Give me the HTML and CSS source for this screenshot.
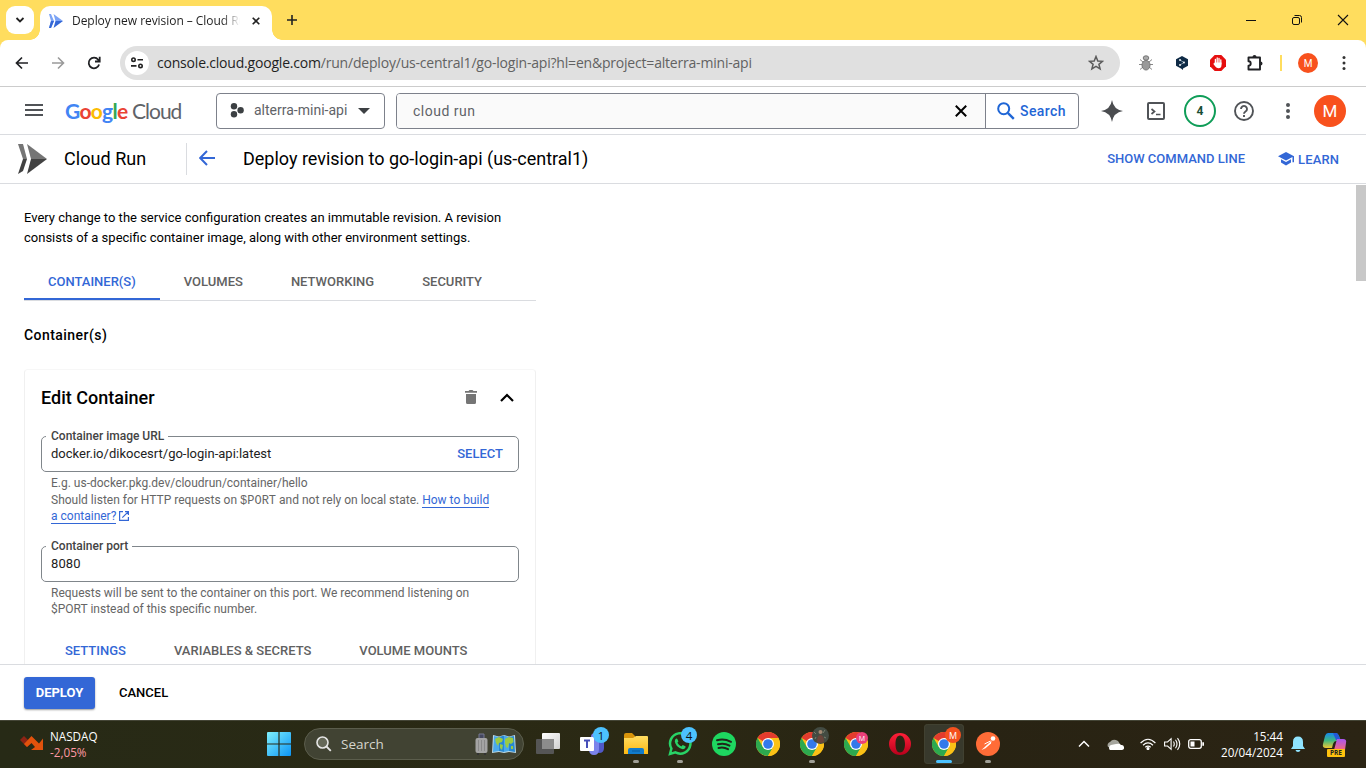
FILE: index.html
```html
<!DOCTYPE html>
<html lang="en">
<head>
<meta charset="utf-8">
<title>Deploy new revision – Cloud Run</title>
<link rel="stylesheet" href="styles.css">
</head>
<body>
<svg class="defs" width="0" height="0">
  <defs>
    <linearGradient id="win" x1="0" y1="0" x2="1" y2="1"><stop offset="0" stop-color="#7ff0fd"/><stop offset="1" stop-color="#0c95f5"/></linearGradient>
    <linearGradient id="folder" x1="0" y1="0" x2="0" y2="1"><stop offset="0" stop-color="#ffdd62"/><stop offset="1" stop-color="#fcb813"/></linearGradient>
    <linearGradient id="opera" x1="0" y1="0" x2="0" y2="1"><stop offset="0" stop-color="#ff2038"/><stop offset="1" stop-color="#b8001c"/></linearGradient>
    <linearGradient id="copA" x1="0" y1="0" x2="0" y2="1"><stop offset="0" stop-color="#1587ee"/><stop offset=".5" stop-color="#3fb87f"/><stop offset="1" stop-color="#f1c832"/></linearGradient>
    <linearGradient id="copB" x1="0" y1="0" x2="0" y2="1"><stop offset="0" stop-color="#a855f0"/><stop offset="1" stop-color="#f46a7c"/></linearGradient>
    <linearGradient id="view" x1="0" y1="0" x2="1" y2="1"><stop offset="0" stop-color="#fff"/><stop offset="1" stop-color="#d0d0d0"/></linearGradient>
    <symbol id="chrome" viewBox="0 0 24 24">
      <circle cx="12" cy="12" r="12" fill="#fbc116"/>
      <path d="M12 12 1.6 6A12 12 0 0 1 22.4 6H12z" fill="#e33b2e"/>
      <path d="M1.6 6A12 12 0 0 0 12 24l5.2-9L12 12 6.8 15z" fill="#2da94f"/>
      <path d="M22.4 6H12v6l5.2 3L12 24A12 12 0 0 0 22.4 6z" fill="#fbc116"/>
      <circle cx="12" cy="12" r="6" fill="#fff"/><circle cx="12" cy="12" r="4.8" fill="#3379ea"/>
    </symbol>
    <symbol id="dots" viewBox="0 0 24 24"><circle cx="12" cy="6" r="2"/><circle cx="12" cy="12" r="2"/><circle cx="12" cy="18" r="2"/></symbol>
  </defs>
</svg>

<div class="screen">
  <header class="titlebar">
    <button class="tab-search"><svg width="10" height="8" viewBox="0 0 10 8"><path d="M1.5 2 5 5.5 8.5 2" fill="none" stroke="#222" stroke-width="1.8"/></svg></button>
    <div class="tab">
      <svg class="favicon" width="16" height="16" viewBox="0 0 16 16"><path d="M1 1h2l3 7-3 7H1l2-7z" fill="#7ba3f5"/><path d="M3 8h3l-3 7H1z" fill="#3367d6"/><path d="M5.500 1 15 8H7.500z" fill="#7ba3f5"/><path d="M7.500 8H15l-9.500 7z" fill="#3367d6"/></svg>
      <span class="tab-title">Deploy new revision – Cloud Run</span>
      <svg class="tab-close" width="8" height="8" viewBox="0 0 8 8"><path d="M.7.7l6.600 6.600M7.300.7.7 7.300" stroke="#222" stroke-width="1.600"/></svg>
    </div>
    <svg class="new-tab" width="10" height="10" viewBox="0 0 10 10"><path d="M5 0v10M0 5h10" stroke="#222" stroke-width="1.600"/></svg>
    <div class="window-controls">
      <svg width="46" height="40" viewBox="0 0 46 40"><path d="M18 20.500h10" stroke="#111"/></svg>
      <svg width="46" height="40" viewBox="0 0 46 40" fill="none" stroke="#111"><rect x="18.500" y="17.500" width="7" height="7" rx="1.500"/><path d="M20.500 15.500h5q2 0 2 2v5"/></svg>
      <svg width="46" height="40" viewBox="0 0 46 40"><path d="M18 15l10 10M28 15 18 25" stroke="#111" stroke-width="1.100"/></svg>
    </div>
  </header>

  <div class="toolbar">
    <span class="cell"><svg width="14" height="14" viewBox="0 0 14 14" fill="none" stroke="#202124" stroke-width="1.700"><path d="M13 7H2M7 1.500 1.500 7 7 12.500"/></svg></span>
    <span class="cell"><svg width="14" height="14" viewBox="0 0 14 14" fill="none" stroke="#9a9a9a" stroke-width="1.600"><path d="M1 7h11M7 1.500 12.500 7 7 12.500"/></svg></span>
    <span class="cell"><svg width="14" height="14" viewBox="0 0 14 14" fill="none" stroke="#202124" stroke-width="1.800"><path d="M12.100 8.500A5.300 5.300 0 1 1 11.200 3.700L12.500 5M12.700.8v4.700H8"/></svg></span>
    <div class="omnibox">
      <span class="site-info"><svg width="14" height="12" viewBox="0 0 14 12" fill="none" stroke="#222" stroke-width="1.600"><circle cx="3.500" cy="2.700" r="1.700"/><path d="M7.500 2.700H13M1 8.900h5.500"/><circle cx="10.500" cy="8.900" r="1.700"/></svg></span>
      <span class="url"><b>console.cloud.google.com</b>/run/deploy/us-central1/go-login-api?hl=en&amp;project=alterra-mini-api</span>
      <svg class="star" width="16" height="16" viewBox="0 0 16 16"><path d="M8 1.500 9.800 6l4.700.3-3.600 3 1.200 4.600L8 11.400l-4.100 2.500 1.200-4.600-3.600-3L6.200 6z" fill="none" stroke="#5b5b5b" stroke-width="1.500"/></svg>
    </div>
    <div class="extensions">
      <span class="cell"><svg width="16" height="16" viewBox="0 0 16 16"><g stroke="#888" fill="none"><path d="M5 7 2 4.500M11 7l3-2.500M4 9.500H1M12 9.500h3M5 12l-3 2.500M11 12l3 2.500"/></g><ellipse cx="8" cy="10.200" rx="4" ry="4.800" fill="#999" stroke="#777"/><ellipse cx="8" cy="3" rx="2.800" ry="2.200" fill="#aaa" stroke="#777"/></svg></span>
      <span class="cell"><svg width="12" height="14" viewBox="0 0 12 14"><path d="M6 0l6 3.200v6.600L7 12.500V14l-2-1.500L0 9.800V3.200z" fill="#0f2b46"/><path d="M4 4l4 2.500L4 9" fill="none" stroke="#9fb4c5" stroke-width=".8"/><g fill="#fff"><circle cx="4" cy="4" r=".9"/><circle cx="8" cy="6.500" r=".9"/><circle cx="4" cy="9" r=".9"/></g></svg></span>
      <span class="cell"><svg width="16" height="16" viewBox="0 0 16 16"><path d="M4.700 0h6.600L16 4.700v6.600L11.300 16H4.700L0 11.300V4.700z" fill="#e60f0f"/><path d="M5.400 8.500V4.500M7.200 8V3M9 8V3.300M10.800 9V4.800" stroke="#fff" stroke-width="1.300" stroke-linecap="round"/><path d="M4.700 7.500h6.800v2.500q0 3.300-3 3.300-2 0-3.200-1.800L3.200 8.800l1-.6z" fill="#fff"/></svg></span>
      <span class="cell"><svg class="puzzle" width="18" height="18" viewBox="0 0 18 18"><path d="M2.500 3.500H14v12H2.500v-3.800a2.200 2.200 0 0 0 0-4.400z" fill="none" stroke="#202124" stroke-width="1.900" stroke-linejoin="round"/><path d="M6.500 3a2 2 0 0 1 4 0zM14.500 7.500a2 2 0 0 1 0 4z" fill="#202124"/></svg></span>
      <span class="profile-divider"></span>
      <span class="cell"><span class="avatar avatar-small">M</span></span>
      <span class="cell"><svg width="16" height="18" viewBox="0 0 16 18" fill="#333"><circle cx="8" cy="3.500" r="1.500"/><circle cx="8" cy="9" r="1.500"/><circle cx="8" cy="14.500" r="1.500"/></svg></span>
    </div>
  </div>

  <div class="console-bar">
    <svg class="menu" width="18" height="12" viewBox="0 0 18 12"><path d="M0 1h18M0 6h18M0 11h18" stroke="#505357" stroke-width="2"/></svg>
    <div class="brand"><span class="google"><i class="b">G</i><i class="r">o</i><i class="y">o</i><i class="b">g</i><i class="g">l</i><i class="r">e</i></span><span class="cloud">Cloud</span></div>
    <div class="project">
      <svg width="14" height="15" viewBox="0 0 14 15" fill="#3c4043"><circle cx="4" cy="3.300" r="3.200"/><circle cx="4" cy="11.300" r="3.200"/><circle cx="10.600" cy="7.300" r="3.200"/></svg>
      <span>alterra-mini-api</span>
      <svg width="12" height="6" viewBox="0 0 12 6"><path d="M0 0h12L6 6z" fill="#3c4043"/></svg>
    </div>
    <div class="search">
      <div class="search-input"><span>cloud run</span><svg width="12" height="12" viewBox="0 0 12 12"><path d="M.8.8l10.400 10.400M11.200.8.8 11.200" stroke="#000" stroke-width="2"/></svg></div>
      <div class="search-button"><svg width="18" height="18" viewBox="0 0 18 18" fill="none" stroke="#1f66d6"><circle cx="6.700" cy="6.700" r="5.500" stroke-width="2"/><path d="M10.800 10.800 16.800 16.800" stroke-width="2.400"/></svg><span>Search</span></div>
    </div>
    <div class="console-icons">
      <span><svg width="22" height="22" viewBox="0 0 22 22"><path d="M11 0q1.500 9.500 11 11-9.500 1.500-11 11Q9.500 12.500 0 11 9.500 9.500 11 0z" fill="#4b4d50"/></svg></span>
      <span><svg width="18" height="18" viewBox="0 0 18 18" fill="none" stroke="#505357"><rect x="1" y="1" width="16" height="16" rx="1" stroke-width="2"/><path d="M4.500 7 7.500 9.500 4.500 12M9 12.500h4.500" stroke-width="1.700"/></svg></span>
      <span><em class="notice-count">4</em></span>
      <span><svg width="20" height="20" viewBox="0 0 20 20" fill="none" stroke="#505357" stroke-width="1.900"><circle cx="10" cy="10" r="9"/><path d="M7 7.900a3 3 0 1 1 4.500 2.600Q10 11.500 10 12.800M10 14v2"/></svg></span>
      <span><svg width="24" height="24" fill="#505357"><use href="#dots"/></svg></span>
      <span class="account"><span class="avatar avatar-large">M</span></span>
    </div>
  </div>

  <div class="page-bar">
    <svg class="run-logo" width="30" height="30" viewBox="0 0 30 30"><path d="M0 0h5l4 15H5z" fill="#757575"/><path d="M5 15h4L5 27l-5 3z" fill="#424242"/><path d="M9 0 29 15H13z" fill="#757575"/><path d="M13 15h16L9 30z" fill="#424242"/></svg>
    <span class="product">Cloud Run</span>
    <div class="page-heading">
      <svg width="16" height="16" viewBox="0 0 16 16" fill="none" stroke="#3367d6" stroke-width="2"><path d="M16 8H1.500M8 1 1.200 8 8 15"/></svg>
      <h1>Deploy revision to go-login-api (us-central1)</h1>
    </div>
    <a class="command">SHOW COMMAND LINE</a>
    <svg class="learn-icon" width="16" height="14" viewBox="0 0 16 14" fill="#3367d6"><path d="M8 0l8 4.300v5.900h-1.500V5.100L8 8.600 0 4.300z"/><path d="M3 7.200l5 2.800 5-2.800v3.400L8 13.500l-5-2.900z"/></svg>
    <a class="learn">LEARN</a>
  </div>

  <main class="content">
    <div class="form">
      <p class="intro">Every change to the service configuration creates an immutable revision. A revision<br>consists of a specific container image, along with other environment settings.</p>
      <nav class="tabs"><a class="active">CONTAINER(S)</a><a>VOLUMES</a><a>NETWORKING</a><a>SECURITY</a></nav>
      <h2>Container(s)</h2>
      <section class="card">
        <div class="card-head">
          <h3>Edit Container</h3>
          <svg width="12" height="14" viewBox="0 0 12 14" fill="#757575"><path d="M0 1h3.500l1-1h3l1 1H12v1.700H0zM1 4h10v8.500Q11 14 9.500 14h-7Q1 14 1 12.500z"/></svg>
          <svg class="collapse" width="14" height="9" viewBox="0 0 14 9"><path d="M1 8l6-6 6 6" fill="none" stroke="#000" stroke-width="2.200"/></svg>
        </div>
        <fieldset class="field"><legend>Container image URL</legend><div class="value"><span>docker.io/dikocesrt/go-login-api:latest</span><a>SELECT</a></div></fieldset>
        <p class="hint hint-image"><span class="example">E.g. us-docker.pkg.dev/cloudrun/container/hello</span>Should listen for HTTP requests on <code>$PORT</code> and not rely on local state. <a>How to build</a><br><a>a container?</a><svg width="10" height="10" viewBox="0 0 10 10" fill="none" stroke="#3367d6" stroke-width="1.200"><path d="M4 .6H.6v8.800h8.800V6M6 .6h3.400V4M9.400.6 3.300 6.700"/></svg></p>
        <fieldset class="field"><legend>Container port</legend><div class="value"><span class="port">8080</span></div></fieldset>
        <p class="hint hint-port">Requests will be sent to the container on this port. We recommend listening on<br><span>$PORT instead of this specific number.</span></p>
        <nav class="subtabs"><a class="active">SETTINGS</a><a>VARIABLES &amp; SECRETS</a><a>VOLUME MOUNTS</a></nav>
      </section>
    </div>
    <div class="scrollbar"><div class="thumb"></div></div>
  </main>

  <footer class="actions"><button class="deploy">DEPLOY</button><button class="cancel">CANCEL</button></footer>

  <div class="taskbar">
    <div class="widget">
      <svg width="24" height="16" viewBox="0 0 24 16"><path d="M0 5 4 1l7 7-4 4z" fill="#8d2415"/><path d="M4 9 11.500 1 19 8.500l4-5V15H11l4-3-3.500-4L7 12z" fill="#e2520c"/></svg>
      <div><span>NASDAQ</span><span class="loss">-2,05%</span></div>
    </div>
    <svg class="start" width="24" height="24" viewBox="0 0 24 24" fill="url(#win)"><path d="M0 1q0-1 1-1h10.400v11.400H0zM12.600 0H23q1 0 1 1v10.400H12.600zM0 12.600h11.400V24H1q-1 0-1-1zM12.600 12.600H24V23q0 1-1 1H12.600z"/></svg>
    <div class="task-search">
      <svg width="16" height="16" viewBox="0 0 16 16"><circle cx="6.500" cy="6.500" r="5.500" fill="#656858" stroke="#e6e6e6" stroke-width="1.600"/><path d="M10.500 10.500l4.300 4.300" stroke="#e6e6e6" stroke-width="1.800"/></svg>
      <span>Search</span>
      <svg class="luggage" width="13" height="22" viewBox="0 0 13 22"><path d="M4 6V1h5v5" fill="#45485f" stroke="#767992"/><rect x=".5" y="5" width="12" height="15" rx="2" fill="#a4a4a4"/><path d="M3.500 7v11M6.500 7v11M9.500 7v11" stroke="#8a8a8a"/><path d="M2 21h2M9 21h2" stroke="#333" stroke-width="2"/></svg>
      <svg class="map" width="24" height="20" viewBox="0 0 24 20"><path d="M1 1l6 1.500L12 1l5 1.500L23 1l1 18-7-1-5 1-5-1-7 1z" fill="#bcd9e6"/><path d="M2 2l5 1v14l-6 1z" fill="#4aa9ea"/><path d="M7 3l5-1.500V18l-5-1z" fill="#2888d4"/><path d="M12 1.500l5 1.500v14l-5 1z" fill="#4aa9ea"/><path d="M17 3l5-1 1 16-6-1z" fill="#2888d4"/><path d="M3 5l4-2 4 2-1 3-3 1-1 3-2-3zM8 10l3 1-1 5-2-2zM13 5l4-2 4 1 .500 4-2.500 2-2-1-1 5-2-1-1-4zM19 12h2v3h-2z" fill="#9acb43"/></svg>
    </div>
    <div class="apps">
      <div class="app"><svg width="24" height="24" viewBox="0 0 24 24"><rect x="6" y="1" width="18" height="16" rx="1" fill="url(#view)"/><rect y="7" width="18" height="15" rx="1" fill="#555"/><path d="M6 7h12v10H6z" fill="#8c8c8c"/></svg></div>
      <div class="app"><svg width="26" height="24" viewBox="0 0 26 24"><circle cx="16" cy="5" r="4" fill="#7b83eb"/><path d="M17 8h8v8q0 5-5 5-2 0-3-2z" fill="#5059c9"/><path d="M10 8h10v9q0 6-5 6t-5-6z" fill="#7b83eb"/><rect x="1" y="5" width="14" height="14" rx="1" fill="#fff"/><path d="M5 8.500h6M8 8.500V16" stroke="#464eb8" stroke-width="2"/></svg><b class="badge">1</b></div>
      <div class="app running"><svg width="26" height="24" viewBox="0 0 26 24"><path d="M1 3q0-2 2-2h6l3 3v4H1z" fill="#d8940b"/><path d="M1 6h9l3-2h11q1 0 1 1v17H1z" fill="url(#folder)"/><path d="M5 22v-4q0-2 2-2h12q2 0 2 2v4z" fill="#117ccc"/><path d="M9 19h8" stroke="#0b5b9e"/></svg></div>
      <div class="app running"><svg width="24" height="24" viewBox="0 0 24 24"><path d="M2 22l1.400-5.500A10.200 10.200 0 1 1 7.400 20.400z" fill="none" stroke="#28d366" stroke-width="2.500"/><path d="M7.200 7.500q1.500-2 2.400 0l.8 2-1 1.300q1.300 2.500 4 3.700l1.300-1.500 2.700 1.300q.7.400-.4 2-2 1.800-5.400-.2T7.300 11.300q-1-2-.1-3.800z" fill="#28d366"/></svg><b class="badge">4</b></div>
      <div class="app"><svg width="24" height="24" viewBox="0 0 24 24"><circle cx="12" cy="12" r="12" fill="#1ed760"/><path d="M5 8.300q7-2 14 1.500M6 12.300q6-1.700 11.500 1.300M6.500 16q5-1.400 9.500 1.200" fill="none" stroke="#20261a" stroke-width="2" stroke-linecap="round"/></svg></div>
      <div class="app"><svg width="24" height="24"><use href="#chrome"/></svg></div>
      <div class="app running"><svg width="24" height="24"><use href="#chrome"/></svg><svg class="photo" width="17" height="17" viewBox="0 0 17 17"><circle cx="8.500" cy="8.500" r="8.500" fill="#434b42"/><path d="M5 15q0-7 3.500-7t3.500 7q-3 2-7 0z" fill="#6a453a"/><circle cx="8.500" cy="5" r="2" fill="#a58a73"/><path d="M2 5l2 2M13 3l-2 3M3 12l1-2M14 11l-2-1" stroke="#79816f"/></svg></div>
      <div class="app"><svg width="24" height="24"><use href="#chrome"/></svg><b class="badge m-pink">M</b></div>
      <div class="app"><svg width="24" height="24" viewBox="0 0 24 24"><path fill-rule="evenodd" d="M12 1a11 11 0 1 0 0 22 11 11 0 1 0 0-22zM12 3.500c3 0 5 3.500 5 8.500s-2 8.500-5 8.500S7.500 17 7.500 12 9 3.500 12 3.500z" fill="url(#opera)"/></svg></div>
      <div class="app current"><svg width="24" height="24"><use href="#chrome"/></svg><b class="badge m-orange">M</b></div>
      <div class="app running"><svg width="24" height="24" viewBox="0 0 24 24"><circle cx="12" cy="12" r="12" fill="#ff6c37"/><circle cx="17" cy="6.500" r="2.300" fill="#fff"/><path d="M15.500 8.800 5.500 18l4-1.800 5.500-4.700z" fill="#fff"/><path d="M8.500 12l6-3" stroke="#fff"/></svg></div>
    </div>
    <div class="tray">
      <svg class="caret" width="12" height="8" viewBox="0 0 12 8"><path d="M1 6.500l5-5 5 5" fill="none" stroke="#fff" stroke-width="1.500"/></svg>
      <svg class="onedrive" width="17" height="11" viewBox="0 0 17 11"><path d="M1 8a3.500 3.500 0 0 1 2-5q3-4 8-1l2 3v5z" fill="#a5a59d"/><path d="M3 11a3 3 0 0 1 1-5l5-1q4-1 5 1a2.500 2.500 0 0 1 1 5z" fill="#fff"/></svg>
      <svg class="wifi" width="16" height="12" viewBox="0 0 16 12" fill="none" stroke="#fff" stroke-width="1.200"><path d="M.6 5Q8-2.500 15.400 5M3 7.200q5-4.600 10 0M5.300 9.200q2.700-2.300 5.400 0"/><circle cx="8" cy="10.500" r="1" fill="#fff"/></svg>
      <svg class="sound" width="17" height="14" viewBox="0 0 17 14" fill="none" stroke="#fff" stroke-width="1.100"><path d="M.6 5h3l3.500-3.300v10.600L3.600 9h-3zM9.500 4.500q1.500 2.500 0 5M11.500 2.800q3 4.200 0 8.400M13.500 1.200q4.500 5.800 0 11.600"/></svg>
      <svg class="battery" width="16" height="10" viewBox="0 0 16 10"><rect x=".7" y=".7" width="12.600" height="8.600" rx="2" fill="none" stroke="#fff" stroke-width="1.300"/><path d="M2.500 2.500h4v5h-4zM14.300 3.300H16v3.400h-1.700z" fill="#fff"/></svg>
      <div class="clock"><span>15:44</span><span>20/04/2024</span></div>
      <svg class="bell" width="14" height="16" viewBox="0 0 14 16" fill="#90e4ff"><path d="M2 10V6q0-5.500 5-5.500T12 6v4l2 3H0zM4.500 14h5Q9 16 7 16t-2.500-2z"/></svg>
      <svg class="copilot" width="26" height="26" viewBox="0 0 26 26"><path d="M6 2h8q2 0 3 3l2 5h-5q-2 0-3 3l-1 4H4q-4 0-3-4L3 5q1-3 3-3z" fill="url(#copA)"/><path d="M11 2h3q2 0 3 3l1.500 4H14z" fill="#2458d8"/><path d="M15 8h6q4 0 3 4l-1 7H12z" fill="url(#copB)"/></svg>
      <b class="pre">PRE</b>
    </div>
  </div>
</div>
</body>
</html>
```
FILE: styles.css
```css
* { box-sizing: border-box; }
body { margin: 0; overflow: hidden; font-family: Roboto, "Liberation Sans", sans-serif; color: #000; background: #fff; }
svg { display: block; flex: none; }
h1, h2, h3, p { margin: 0; }
button { border: 0; background: none; padding: 0; font: inherit; }
.defs { position: absolute; }
.screen { width: 1366px; height: 768px; display: flex; flex-direction: column; white-space: nowrap; }

/* Browser window */
.titlebar { height: 40px; background: #ffdd5e; display: flex; padding-left: 6px; align-items: flex-start; font-family: "Open Sans", sans-serif; }
.tab-search { width: 28px; height: 28px; margin: 6px 6px 0 0; border-radius: 9px; background: #fff; display: grid; place-items: center; }
.tab { position: relative; width: 232px; height: 34px; margin-top: 6px; padding: 0 12px 5px 8px; border-radius: 10px 10px 0 0; background: #fff; display: flex; align-items: center; }
.tab::before, .tab::after { content: ""; position: absolute; bottom: 0; width: 10px; height: 10px; }
.tab::before { left: -10px; background: radial-gradient(circle at 0 0, transparent 9.500px, #fff 10px); }
.tab::after { right: -10px; background: radial-gradient(circle at 100% 0, transparent 9.500px, #fff 10px); }
.tab-title { width: 168px; margin-left: 8px; overflow: hidden; font-size: 12px; letter-spacing: -.05px; color: #1f1f1f; -webkit-mask-image: linear-gradient(90deg, #000 150px, transparent 168px); }
.tab-close { margin-left: auto; }
.new-tab { margin: 15px 0 0 15px; }
.window-controls { margin-left: auto; display: flex; }
.toolbar { height: 47px; background: linear-gradient(#ffdd5e, #ffdd5e) 0 0 / 100% 10px no-repeat; position: relative; z-index: 0; display: flex; align-items: center; padding: 0 4px; border-bottom: 1px solid #ccc; }
.toolbar::before { content: ""; position: absolute; inset: 0; z-index: -1; background: #fff; border-radius: 8px 8px 0 0; }
.cell { width: 36px; display: flex; justify-content: center; }
.puzzle { margin-left: 2px; }
.omnibox { width: 1000px; height: 34px; margin-left: 8px; border-radius: 17px; background: #e0e0e0; display: flex; align-items: center; padding: 0 16px 0 5px; }
.site-info { width: 24px; height: 24px; border-radius: 50%; background: #fff; display: grid; place-items: center; }
.url { margin: -1px 0 0 8px; font: 14px "Open Sans", sans-serif; letter-spacing: -.2px; color: #626262; }
.url b { font-weight: 400; color: #1f1f1f; }
.star { margin-left: auto; }
.extensions { display: flex; align-items: center; margin-left: 8px; }
.profile-divider { width: 2px; height: 16px; margin: 0 8px; background: #ffdd5e; }
.avatar { display: grid; place-items: center; border-radius: 50%; background: #f8511d; color: #fff; font-family: Roboto, sans-serif; }
.avatar-small { width: 20px; height: 20px; font-size: 10px; }
.avatar-large { width: 32px; height: 32px; font-size: 17px; margin-top: 1px; }

/* Cloud console header */
.console-bar { height: 48px; display: flex; align-items: center; padding-left: 25px; border-bottom: 1px solid #dadce0; }
.menu { margin-top: -1px; }
.brand { width: 151px; padding: 0 0 1px 22px; display: flex; align-items: center; font: 21px Lato, sans-serif; }
.brand i { font-style: normal; }
.google { width: 67px; font-weight: 700; letter-spacing: -.7px; }
.cloud { color: #5f6368; letter-spacing: -1px; }
.b { color: #4285f4; } .r { color: #ea4335; } .y { color: #fbbc04; } .g { color: #34a853; }
.project { width: 169px; height: 36px; margin-left: 22px; border: 1px solid #7d818b; border-radius: 4px; display: flex; align-items: center; padding-left: 14px; font-size: 14px; color: #5f6368; }
.project span { width: 103px; margin: -1px 0 0 10px; }
.project svg:first-child { margin: -1px 0 0 -1px; }
.project svg:last-child { margin-left: 1px; }
.search { width: 683px; height: 36px; margin-left: 11px; border: 1px solid #7d818b; border-radius: 4px; display: flex; overflow: hidden; }
.search-input { width: 589px; background: #fafafa; border-right: 1px solid #7d818b; padding: 0 18px 0 16px; display: flex; align-items: center; justify-content: space-between; font-size: 14px; color: #5f6368; letter-spacing: .5px; }
.search-button { display: flex; align-items: center; padding-left: 11px; gap: 5px; font-size: 14px; font-weight: 500; color: #1f66d6; letter-spacing: .4px; }
.console-icons { display: flex; margin-left: 11px; }
.console-icons > span { width: 44px; height: 44px; display: grid; place-items: center; }
.console-icons > .account { width: 40px; }
.notice-count { width: 32px; height: 32px; border: 2px solid #0f9d58; border-radius: 50%; display: grid; place-items: center; font: bold 12px Roboto, sans-serif; color: #174d34; }
.page-bar { height: 49px; display: flex; align-items: center; padding: 0 28px 0 18px; border-bottom: 1px solid #dadce0; }
.product { width: 122px; margin: -2px 0 0 16px; font-size: 18px; letter-spacing: .05px; }
.page-heading { height: 32px; display: flex; align-items: center; border-left: 1px solid #dadce0; padding-left: 12px; }
.page-heading svg { margin-top: -2px; }
.page-heading h1 { font-size: 18px; font-weight: 400; margin: -2px 0 0 28px; letter-spacing: -.01px; }
.command, .learn { font-size: 13px; font-weight: 500; color: #3367d6; }
.command { margin: -2px 0 0 auto; }
.learn-icon { margin-left: 33px; }
.learn { width: 40px; margin-left: 4px; letter-spacing: .15px; }

/* Revision form */
.content { height: 480px; display: flex; justify-content: space-between; overflow: hidden; }
.form { width: 536px; padding: 24px 0 0 24px; }
.intro { font-size: 13px; line-height: 20px; }
.tabs { height: 53px; display: flex; border-bottom: 1px solid #dadce0; font-size: 13px; font-weight: 500; color: #616161; }
.tabs a { height: 52px; padding: 26px 24px 0; }
.tabs .active { border-bottom: 2px solid #3367d6; }
.active, .tabs .active { color: #3367d6; }
.form h2 { margin-top: 24px; font-size: 14px; line-height: 20px; font-weight: 500; letter-spacing: .45px; }
.card { height: 400px; margin-top: 24px; padding: 15px 16px; border: 1px solid #f0f0f0; border-top-color: #f7f7f7; border-radius: 4px; }
.card-head { height: 24px; display: flex; align-items: center; }
.card-head h3 { width: 424px; font-size: 18px; font-weight: 500; }
.collapse { margin-left: 23px; }
.field { min-width: 0; height: 43px; margin: 20px 0 0; padding: 0 0 0 9px; border: 1px solid #80868b; border-radius: 5px; }
.field legend { height: 14px; margin-left: -5px; padding: 0 4px 0 5px; font-size: 12px; line-height: 14px; font-weight: 500; color: #444; }
.value { height: 21px; display: flex; align-items: center; justify-content: space-between; padding-right: 15px; font-size: 13px; color: #222; }
.value a { color: #3367d6; font-weight: 500; }
.port { letter-spacing: .1px; }
.hint { padding-left: 10px; font-size: 12px; line-height: 16px; color: #666; }
.hint a { color: #3367d6; border-bottom: 1px solid #3367d6; }
.hint code { font: 12px "Liberation Mono", monospace; }
.hint svg { display: inline-block; margin-left: 3px; vertical-align: -1px; }
.example { display: block; height: 17px; }
.hint-image { height: 44px; margin-top: 3px; }
.hint-port { margin-top: 3px; }
.subtabs { margin-top: 26px; padding-left: 24px; display: flex; gap: 48px; font-size: 13px; font-weight: 500; color: #616161; }
.scrollbar { width: 10px; padding-top: 1px; }
.thumb { height: 96px; background: #c8c8c8; }
.actions { height: 56px; border-top: 1px solid #dadce0; display: flex; align-items: center; padding-left: 24px; font-size: 13px; font-weight: 500; }
.deploy { width: 71px; height: 32px; border-radius: 3px; background: #3367d6; color: #fff; font-weight: 700; box-shadow: 0 1px 2px #0006; }
.cancel { margin-left: 24px; }

/* Desktop taskbar */
.taskbar { height: 48px; padding-left: 20px; box-shadow: inset 0 1px #444536; background: linear-gradient(90deg, #272a16, #2b2914 48%, #282313 70%, #2b2414); display: flex; align-items: center; color: #fff; font: 12px "Open Sans", sans-serif; }
.widget { width: 248px; display: flex; gap: 6px; align-items: center; line-height: 16px; }
.widget div { display: grid; }
.widget svg { margin-top: -3px; }
.widget span { font-size: 11.700px; }
.widget .loss { color: #ff99a4; }
.start { margin-left: -1px; }
.task-search { width: 220px; height: 32px; margin-left: 13px; padding-left: 11px; border: 1px solid #5b5d4c; border-radius: 16px; background: #414333; display: flex; align-items: center; font-size: 13.500px; color: #d6d6ce; }
.task-search span { width: 134px; margin-left: 9px; }
.map { margin-left: 4px; }
.apps { display: flex; margin-left: 2px; }
.app { position: relative; width: 44px; height: 40px; display: grid; place-items: center; }
.running::after, .current::after { content: ""; position: absolute; bottom: 1px; left: 19px; width: 6px; height: 3px; border-radius: 2px; background: #a09f96; }
.current { background: #38392c; border-radius: 4px; box-shadow: inset 0 0 0 1px #414131; width: 40px; margin: 0 2px; }
.current::after { left: 12px; width: 16px; background: #4cc2ff; }
.badge { position: absolute; left: 23px; top: 3px; width: 16px; height: 16px; border-radius: 50%; display: grid; place-items: center; background: #4cc2ff; color: #111; font: 11.500px "Open Sans", sans-serif; }
.m-pink { left: 22px; top: 8px; width: 12px; height: 12px; background: #ec407a; color: #fff; font-size: 7px; }
.m-orange { left: 21px; background: #f4511e; color: #fff; font-size: 9px; }
.photo { position: absolute; left: 22px; top: 3px; }
.tray { display: flex; align-items: center; margin-left: 68px; }
.onedrive { margin-left: 17px; }
.wifi { margin-left: 16px; }
.sound { margin-left: 8px; }
.battery { margin-left: 7px; }
.clock { width: 79px; display: grid; text-align: right; line-height: 16px; font-size: 11.700px; }
.bell { margin-left: 8px; }
.copilot { margin-left: 17px; }
.pre { width: 18px; height: 8px; margin: 18px 0 0 -21px; z-index: 1; background: #ffc20e; border-radius: 1px; color: #222; font: bold 6.500px/8px "Open Sans", sans-serif; text-align: center; }
```
